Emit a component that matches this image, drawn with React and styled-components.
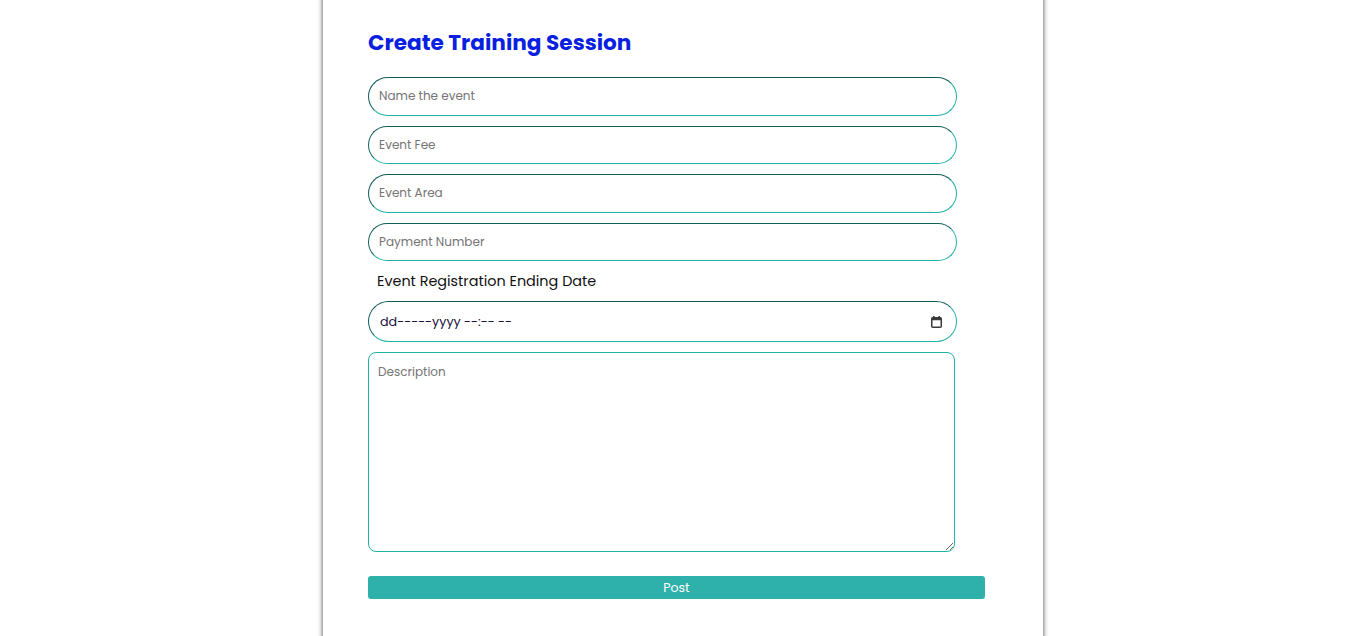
import React, { useLayoutEffect } from "react";
import styled, { createGlobalStyle } from "styled-components";

const SCROLL_OFFSET = 557;

const GlobalStyle = createGlobalStyle`
  body {
    margin: 0;
    background: #ffffff;
    font-family: Poppins, "Open Sans", sans-serif;
  }
  * {
    box-sizing: border-box;
  }
`;

const Page = styled.div`
  display: flex;
  padding-left: 323px;
`;

const Card = styled.section`
  width: 720px;
  background: #ffffff;
  box-shadow: 0 0 5px rgba(0, 0, 0, 0.75);
  padding: ${SCROLL_OFFSET + 26}px 58px 342px 45px;
`;

const Title = styled.h2`
  margin: 0 0 18px;
  font-size: 21.6px;
  line-height: 33px;
  font-weight: 700;
  color: #0a1fe0;
`;

const Form = styled.form`
  display: flex;
  flex-direction: column;
  align-items: flex-start;
`;

const Field = styled.input`
  width: 589px;
  height: 38.6px;
  margin-bottom: 10px;
  padding: 0 10px;
  border: 1px inset #20b2aa;
  border-radius: 21px;
  font-family: inherit;
  font-size: 12px;
  background: #fff;
  outline: none;

  &::placeholder {
    color: #757575;
  }
`;

const Label = styled.label`
  padding: 0 0 10px 9px;
  font-size: 14.4px;
  line-height: 20px;
  color: #111;
`;

const DateBox = styled.div`
  display: flex;
  align-items: center;
  justify-content: space-between;
  width: 589px;
  height: 41px;
  margin-bottom: 10px;
  padding: 0 14px 0 11px;
  border: 1px inset #20b2aa;
  border-radius: 21px;
  font-size: 12.7px;
  color: #1a1040;
`;

const TextArea = styled.textarea`
  width: 587px;
  height: 200px;
  margin-bottom: 24px;
  padding: 10px 9px;
  border: 1px solid #20b2aa;
  border-radius: 8px;
  font-family: inherit;
  font-size: 12px;
  outline: none;

  &::placeholder {
    color: #757575;
  }
`;

const Button = styled.button`
  width: 617px;
  height: 23px;
  border: none;
  border-radius: 3px;
  background: #2fb1ab;
  color: #ffffff;
  font-family: inherit;
  font-size: 12.5px;
  cursor: pointer;
`;

const CalendarIcon = () => (
  <svg width="11" height="12" viewBox="0 0 11 12" aria-hidden="true">
    <rect x="2" y="0" width="1.5" height="2.5" fill="#3a3a3a" />
    <rect x="7.5" y="0" width="1.5" height="2.5" fill="#3a3a3a" />
    <rect x="0.75" y="1.75" width="9.5" height="9.5" rx="1" fill="none" stroke="#3a3a3a" strokeWidth="1.5" />
    <rect x="0.75" y="1.75" width="9.5" height="2.5" fill="#3a3a3a" />
  </svg>
);

export default function App() {
  useLayoutEffect(() => {
    window.scrollTo(0, SCROLL_OFFSET);
  }, []);

  return (
    <>
      <GlobalStyle />
      <Page>
        <Card>
          <Title>Create Training Session</Title>
          <Form onSubmit={(e) => e.preventDefault()}>
            <Field type="text" placeholder="Name the event" />
            <Field type="text" placeholder="Event Fee" />
            <Field type="text" placeholder="Event Area" />
            <Field type="text" placeholder="Payment Number" />
            <Label htmlFor="ending">Event Registration Ending Date</Label>
            <DateBox id="ending" role="textbox">
              <span>dd-----yyyy --:-- --</span>
              <CalendarIcon />
            </DateBox>
            <TextArea placeholder="Description" />
            <Button type="submit">Post</Button>
          </Form>
        </Card>
      </Page>
    </>
  );
}
